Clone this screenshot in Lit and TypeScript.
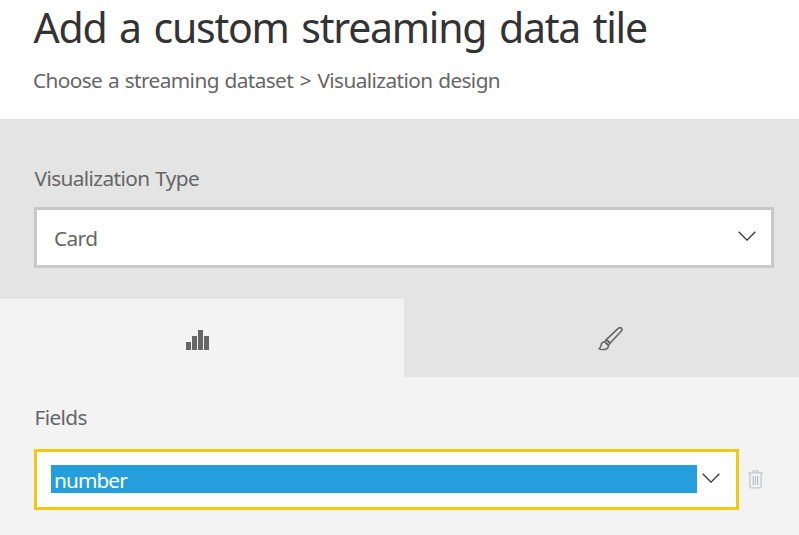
import { LitElement, html, css, svg } from "lit";
import { customElement } from "lit/decorators.js";

const chevron = html`<svg class="chevron" width="18" height="10" viewBox="0 0 18 10" aria-hidden="true">
  ${svg`<path d="M.7 .8 9 9.100 17.300 .8" fill="none" stroke="#333" stroke-width="1.3"/>`}
</svg>`;

@customElement("app-root")
export class AppRoot extends LitElement {
  static styles = css`
    :host {
      display: flex;
      flex-direction: column;
      height: 535px;
      overflow: hidden;
      background: #f3f3f3;
      color: #666;
      font: 20.8px/28px "Noto Sans", "Open Sans", sans-serif;
      letter-spacing: -0.6px;
      word-spacing: 0.9px;
      white-space: nowrap;
    }
    * { box-sizing: border-box; }
    svg { display: block; flex: none; }
    header { height: 119px; background: #fff; padding: 0 33px; }
    h1 {
      margin: 0;
      padding-left: 0.5px;
      font-size: 41px;
      line-height: 54px;
      font-weight: 400;
      letter-spacing: -1.25px;
      word-spacing: 3.3px;
      color: #333;
    }
    .crumbs { margin-top: 12px; }
    .sep { margin: 0 0.8px; }
    .type { height: 180px; background: #e4e4e4; padding: 45px 25px 0 34px; }
    .type-label, .fields-label { margin-left: 0.5px; }
    .select {
      display: flex;
      align-items: center;
      justify-content: space-between;
      height: 61px;
      margin-top: 15px;
      padding: 0 15px 0 17px;
      border: 3px solid #c8c8c8;
      background: #fff;
    }
    .chevron { margin-top: -3px; }
    .tabs { display: flex; height: 78px; }
    .tab { display: flex; align-items: center; justify-content: center; }
    .data { width: 404px; padding: 4px 9px 0 0; }
    .design { flex: 1; background: #e4e4e4; padding: 0 0 0 17px; }
    .fields { padding: 26px 0 0 34px; }
    .row { display: flex; align-items: center; gap: 9px; margin-top: 18px; }
    .active { width: 705px; margin: 0; border-color: #f2c811; padding: 0 16px 0 14px; }
    .value { width: 646px; height: 28px; margin-bottom: 1px; padding-left: 3px; background: #259fdc; color: #fff; line-height: 31px; letter-spacing: -0.9px; }
  `;

  render() {
    return html`
      <header>
        <h1><span class="title">Add a custom streaming data tile</span></h1>
        <div class="crumbs"><span class="path">Choose a streaming dataset <span class="sep">&gt;</span> Visualization design</span></div>
      </header>
      <section class="type">
        <div><span class="type-label">Visualization Type</span></div>
        <div class="select"><span class="card">Card</span>${chevron}</div>
      </section>
      <nav class="tabs">
        <div class="tab data">
          <svg width="23" height="20" viewBox="0 0 23 20" fill="#666">
            <path d="M0 12h5v8H0zM6 6h5v14H6zM12 0h5v20h-5zM18 6h5v14h-5z"/>
          </svg>
        </div>
        <div class="tab design">
          <svg width="25" height="25" viewBox="0 0 25 25" fill="none" stroke="#666" stroke-width="1.6" stroke-linejoin="round">
            <path d="M8.300 13.700 20.200 2.400c2.300-2 5 .5 3 2.900L12 17.200z"/>
            <path d="M8.300 13.700 12 17.200 10.300 19.200 6.800 16z"/>
            <path d="M6.800 16c-2-.3-3.500 1-3.700 3-.1 1.700-.7 2.700-2 3.600 1.300 1 4.800 1.300 6.900.5 2-.8 2.900-2.500 2.300-3.900z"/>
          </svg>
        </div>
      </nav>
      <section class="fields">
        <div><span class="fields-label">Fields</span></div>
        <div class="row">
          <div class="select active"><div class="value"><span class="number">number</span></div>${chevron}</div>
          <svg width="15" height="19" viewBox="0 0 15 19" fill="none" stroke="#c3c7cc" stroke-width="1.3">
            <path d="M.5 2.800h14.500M5 2.500V.9h5v1.600M1.900 3v13.800q0 1 1 1h9.200q1 0 1-1V3"/>
            <path d="M5.300 6v9M7.500 6v9M9.700 6v9" stroke-width="1.4"/>
          </svg>
        </div>
      </section>
    `;
  }
}
